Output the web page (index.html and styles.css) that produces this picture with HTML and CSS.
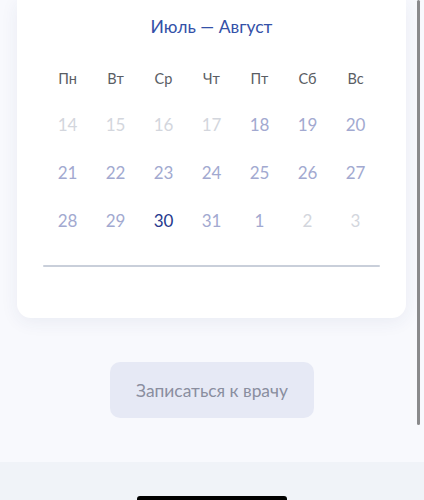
FILE: index.html
```html
<!DOCTYPE html>
<html lang="ru">
<head>
<meta charset="utf-8">
<link rel="stylesheet" href="styles.css">
</head>
<body>
<div class="screen">
  <main class="content">
    <section class="card">
      <h2 class="month">Июль — Август</h2>
      <div class="grid weekdays">
        <span>Пн</span><span>Вт</span><span>Ср</span><span>Чт</span><span>Пт</span><span>Сб</span><span>Вс</span>
      </div>
      <div class="grid days">
        <span class="off">14</span><span class="off">15</span><span class="off">16</span><span class="off">17</span><span class="on">18</span><span class="on">19</span><span class="on">20</span>
        <span class="on">21</span><span class="on">22</span><span class="on">23</span><span class="on">24</span><span class="on">25</span><span class="on">26</span><span class="on">27</span>
        <span class="on">28</span><span class="on">29</span><span class="sel">30</span><span class="on">31</span><span class="on">1</span><span class="off">2</span><span class="off">3</span>
      </div>
      <div class="divider"></div>
    </section>
    <div class="actions">
      <button class="btn">Записаться к врачу</button>
    </div>
  </main>
  <footer class="bottom">
    <div class="home"></div>
  </footer>
  <div class="scrollbar"></div>
</div>
</body>
</html>
```
FILE: styles.css
```css
* { box-sizing: border-box; }
html, body { margin: 0; padding: 0; }
body {
  font-family: Lato, "Noto Sans", sans-serif;
  background: #f8f9fd;
  width: 424px;
  height: 500px;
  overflow: hidden;
}
.screen {
  position: relative;
  height: 500px;
  display: flex;
  flex-direction: column;
}
.content {
  height: 462px;
  background: #f8f9fd;
  display: flex;
  flex-direction: column;
}
.card {
  margin: 0 18px 0 17px;
  height: 318px;
  background: #ffffff;
  border-radius: 0 0 14px 14px;
  box-shadow: 0 4px 18px rgba(40, 60, 120, 0.07);
  padding-top: 17px;
  display: flex;
  flex-direction: column;
  align-items: center;
}
.month {
  margin: 0;
  font-weight: 400;
  font-size: 17.5px;
  line-height: 20px;
  color: #3451a8;
}
.grid {
  display: grid;
  grid-template-columns: repeat(7, 48px);
  justify-items: center;
  align-items: center;
}
.weekdays {
  margin-top: 19px;
  height: 44px;
  font-size: 14.5px;
  color: #5a5d64;
}
.days {
  grid-auto-rows: 48px;
  font-size: 17px;
}
.off { color: #d3d6dd; }
.on { color: #a2a9d0; }
.sel { color: #26398d; }
.divider {
  margin-top: 21px;
  width: 337px;
  height: 2px;
  background: #c9cfda;
  border-radius: 1px;
}
.actions {
  display: flex;
  justify-content: center;
  margin-top: 44px;
}
.btn {
  width: 204px;
  height: 56px;
  border: none;
  border-radius: 10px;
  background: #e6e9f5;
  color: #8a8e9f;
  font-family: Lato, "Noto Sans", sans-serif;
  font-size: 17.4px;
  padding: 0;
}
.bottom {
  height: 38px;
  background: #f0f3f8;
  display: flex;
  justify-content: center;
  padding-top: 34px;
}
.home {
  width: 150px;
  height: 6px;
  background: #000;
  border-radius: 3px;
}
.scrollbar {
  position: absolute;
  top: 0;
  left: 417px;
  width: 3px;
  height: 425px;
  background: #8a8a8c;
  border-radius: 2px;
}
```
